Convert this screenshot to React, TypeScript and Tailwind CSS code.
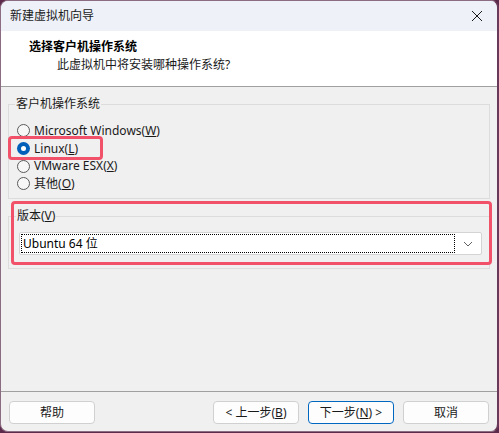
import React from "react";

const font = {
  fontFamily: '"Segoe UI", "Noto Sans", "Noto Sans CJK SC", sans-serif',
};

function Radio({ checked, label, u }: { checked?: boolean; label: string; u: string }) {
  return (
    <div className="flex items-center h-[17.7px]">
      <div
        className={
          checked
            ? "w-[13px] h-[13px] rounded-full bg-[#005fb8] flex items-center justify-center"
            : "w-[13px] h-[13px] rounded-full border border-[#5a5a5a] bg-[#f7f7f7]"
        }
      >
        {checked && <div className="w-[5px] h-[5px] rounded-full bg-white" />}
      </div>
      <span className="ml-[4px] text-[12px] text-[#1a1a1a] leading-none">
        {label}(<span className="underline">{u}</span>)
      </span>
    </div>
  );
}

function Btn({ children, primary }: { children: React.ReactNode; primary?: boolean }) {
  return (
    <div
      className={
        "w-[86px] h-[23px] rounded-[4px] bg-[#fdfdfd] flex items-center justify-center text-[12px] text-[#1a1a1a] border " +
        (primary ? "border-[#0067c0]" : "border-[#d0d0d0]")
      }
    >
      {children}
    </div>
  );
}

export default function App() {
  return (
    <div className="w-[499px] h-[433px] bg-[#5c2b4c]" style={font}>
      <div className="relative w-[499px] h-[432px] rounded-[8px] overflow-hidden border border-[#8c6c82] border-r-[2px] border-r-[#6a3a5a] flex flex-col bg-[#f0f0f0]">
        {/* title bar */}
        <div className="h-[30px] bg-[#eef1f8] flex items-center justify-between pl-[9px] pr-[14px] shrink-0">
          <span className="text-[12px] text-[#1a1a1a]">新建虚拟机向导</span>
          <svg width="12" height="12" viewBox="0 0 12 12">
            <path d="M1 1 L11 11 M11 1 L1 11" stroke="#1a1a1a" strokeWidth="1" />
          </svg>
        </div>
        {/* header */}
        <div className="h-[56px] bg-white border-b border-[#a0a0a0] shrink-0 pl-[28px] pt-[7px]">
          <div className="text-[12px] font-bold text-[#000] leading-[18px]">选择客户机操作系统</div>
          <div className="text-[12px] text-[#1a1a1a] leading-[18px] pl-[28px]">此虚拟机中将安装哪种操作系统?</div>
        </div>
        {/* body */}
        <div className="flex-1 px-[7px] pt-[17px]">
          <div className="relative border border-[#dcdcdc] h-[95px] pl-[8px] pt-[17px]">
            <div className="absolute -top-[9px] left-[6px] bg-[#f0f0f0] px-[1px] text-[12px] text-[#1a1a1a] leading-[16px]">
              客户机操作系统
            </div>
            <Radio label="Microsoft Windows" u="W" />
            <Radio checked label="Linux" u="L" />
            <Radio label="VMware ESX" u="X" />
            <Radio label="其他" u="O" />
          </div>
          <div className="relative mt-[17px] border border-[#dcdcdc] h-[53px] pl-[10px] pt-[15px] pr-[7px]">
            <div className="absolute -top-[9px] left-[7px] bg-[#f0f0f0] px-[1px] text-[12px] text-[#1a1a1a] leading-[16px]">
              版本(<span className="underline">V</span>)
            </div>
            <div className="h-[23px] bg-white border border-[#d4d4d4] rounded-[2px] flex items-center pl-[1px] pr-[8px]">
              <div className="flex-1 h-[19px] border border-dotted border-[#000] flex items-center pl-[1px] text-[12px] text-[#000]">
                Ubuntu 64 位
              </div>
              <svg className="ml-[8px]" width="10" height="6" viewBox="0 0 10 6">
                <path d="M1 1 L5 5 L9 1" stroke="#606060" fill="none" strokeWidth="1" />
              </svg>
            </div>
          </div>
        </div>
        {/* footer */}
        <div className="h-[40px] border-t border-[#a0a0a0] shrink-0 flex items-start pt-[9px] pl-[8px] pr-[8px]">
          <Btn>帮助</Btn>
          <div className="flex-1" />
          <Btn>
            &lt; 上一步(<span className="underline">B</span>)
          </Btn>
          <div className="w-[9px]" />
          <Btn primary>
            下一步(<span className="underline">N</span>) &gt;
          </Btn>
          <div className="w-[9px]" />
          <Btn>取消</Btn>
        </div>

        {/* red highlight overlays */}
        <div className="absolute left-[7px] top-[135px] w-[95px] h-[24px] border-[3px] border-[#f2516a] rounded-[4px]" />
        <div className="absolute left-[10px] top-[200px] w-[481px] h-[64px] border-[3px] border-[#f2516a] rounded-[4px]" />
      </div>
    </div>
  );
}
